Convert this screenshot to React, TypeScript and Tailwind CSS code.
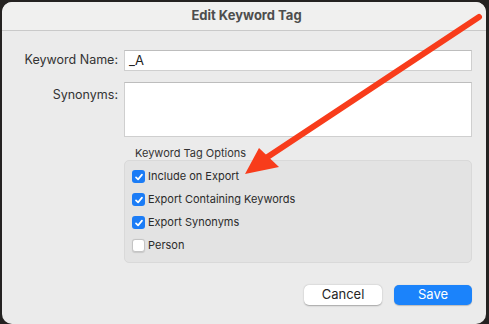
import React from "react";

function Check({ checked }: { checked: boolean }) {
  if (!checked) {
    return (
      <span className="block w-[13px] h-[13px] rounded-[3px] bg-white border border-[#c4c4c4] shadow-[0_0.5px_1px_rgba(0,0,0,0.12)]" />
    );
  }
  return (
    <span className="flex items-center justify-center w-[13px] h-[13px] rounded-[3px] bg-[#1b7cf6]">
      <svg width="10" height="10" viewBox="0 0 10 10">
        <path d="M2 5.3 L4.1 7.4 L8 2.6" fill="none" stroke="white" strokeWidth="1.7" strokeLinecap="round" strokeLinejoin="round" />
      </svg>
    </span>
  );
}

export default function App() {
  const opts: [string, boolean][] = [
    ["Include on Export", true],
    ["Export Containing Keywords", true],
    ["Export Synonyms", true],
    ["Person", false],
  ];
  return (
    <div
      className="relative w-[489px] h-[324px] bg-[#242221] overflow-hidden pl-[2px] pt-[2px]"
      style={{ fontFamily: "Inter, 'Liberation Sans', sans-serif" }}
    >
      <div className="w-[484px] h-[322px] rounded-[10px] bg-[#ebebeb] overflow-hidden flex flex-col">
        <div className="h-[29px] bg-[#f0f0ef] border-b border-[#c9c9c9] flex items-center justify-center pl-[5px] pb-[1px]">
          <span className="text-[13px] font-bold text-[#4d4d4d]">Edit Keyword Tag</span>
        </div>
        <div className="flex flex-col pr-[14px] pt-[19px]">
          <div className="grid grid-cols-[116px_1fr] gap-x-[6px] gap-y-[11px]">
            <div className="text-right text-[12.5px] text-[#333] h-[21px] flex items-center justify-end">Keyword Name:</div>
            <div className="h-[21px] bg-white border border-[#cfcfcf] border-t-[#bdbdbd] flex items-center px-[4px] text-[13px] text-[#222]">_A</div>
            <div className="text-right text-[12.5px] text-[#333] pt-[5px] leading-[16px]">Synonyms:</div>
            <div className="h-[55px] bg-white border border-[#cfcfcf] border-t-[#bdbdbd]" />
          </div>
          <div className="ml-[122px] mt-[9px] flex flex-col">
            <div className="pl-[11px] h-[14px] leading-[14px] text-[11px] text-[#333]">Keyword Tag Options</div>
            <div className="h-[103px] rounded-[5px] bg-[#e3e3e3] border border-[#d9d9d9] pl-[7px] pt-[4px] flex flex-col">
              {opts.map(([label, c]) => (
                <div key={label} className="h-[23px] flex items-center gap-[3px]">
                  <Check checked={c} />
                  <span className="text-[11px] text-[#2b2b2b]">{label}</span>
                </div>
              ))}
            </div>
          </div>
          <div className="mt-[22px] flex justify-end gap-[12px]">
            <button className="w-[78px] h-[20px] rounded-[5px] bg-white text-[13px] text-[#262626] shadow-[0_0.5px_1.5px_rgba(0,0,0,0.3)] flex items-center justify-center">Cancel</button>
            <button className="w-[78px] h-[20px] rounded-[5px] bg-[#1b83fb] text-[13px] text-white shadow-[0_0.5px_1px_rgba(0,0,0,0.2)] flex items-center justify-center">Save</button>
          </div>
        </div>
      </div>
      <svg className="absolute left-0 top-0" width="489" height="324" viewBox="0 0 489 324">
        <line x1="479" y1="17" x2="266" y2="158" stroke="#f83c1b" strokeWidth="6" strokeLinecap="round" />
        <polygon points="245,174 259,148 279,167" fill="#f83c1b" />
      </svg>
    </div>
  );
}
